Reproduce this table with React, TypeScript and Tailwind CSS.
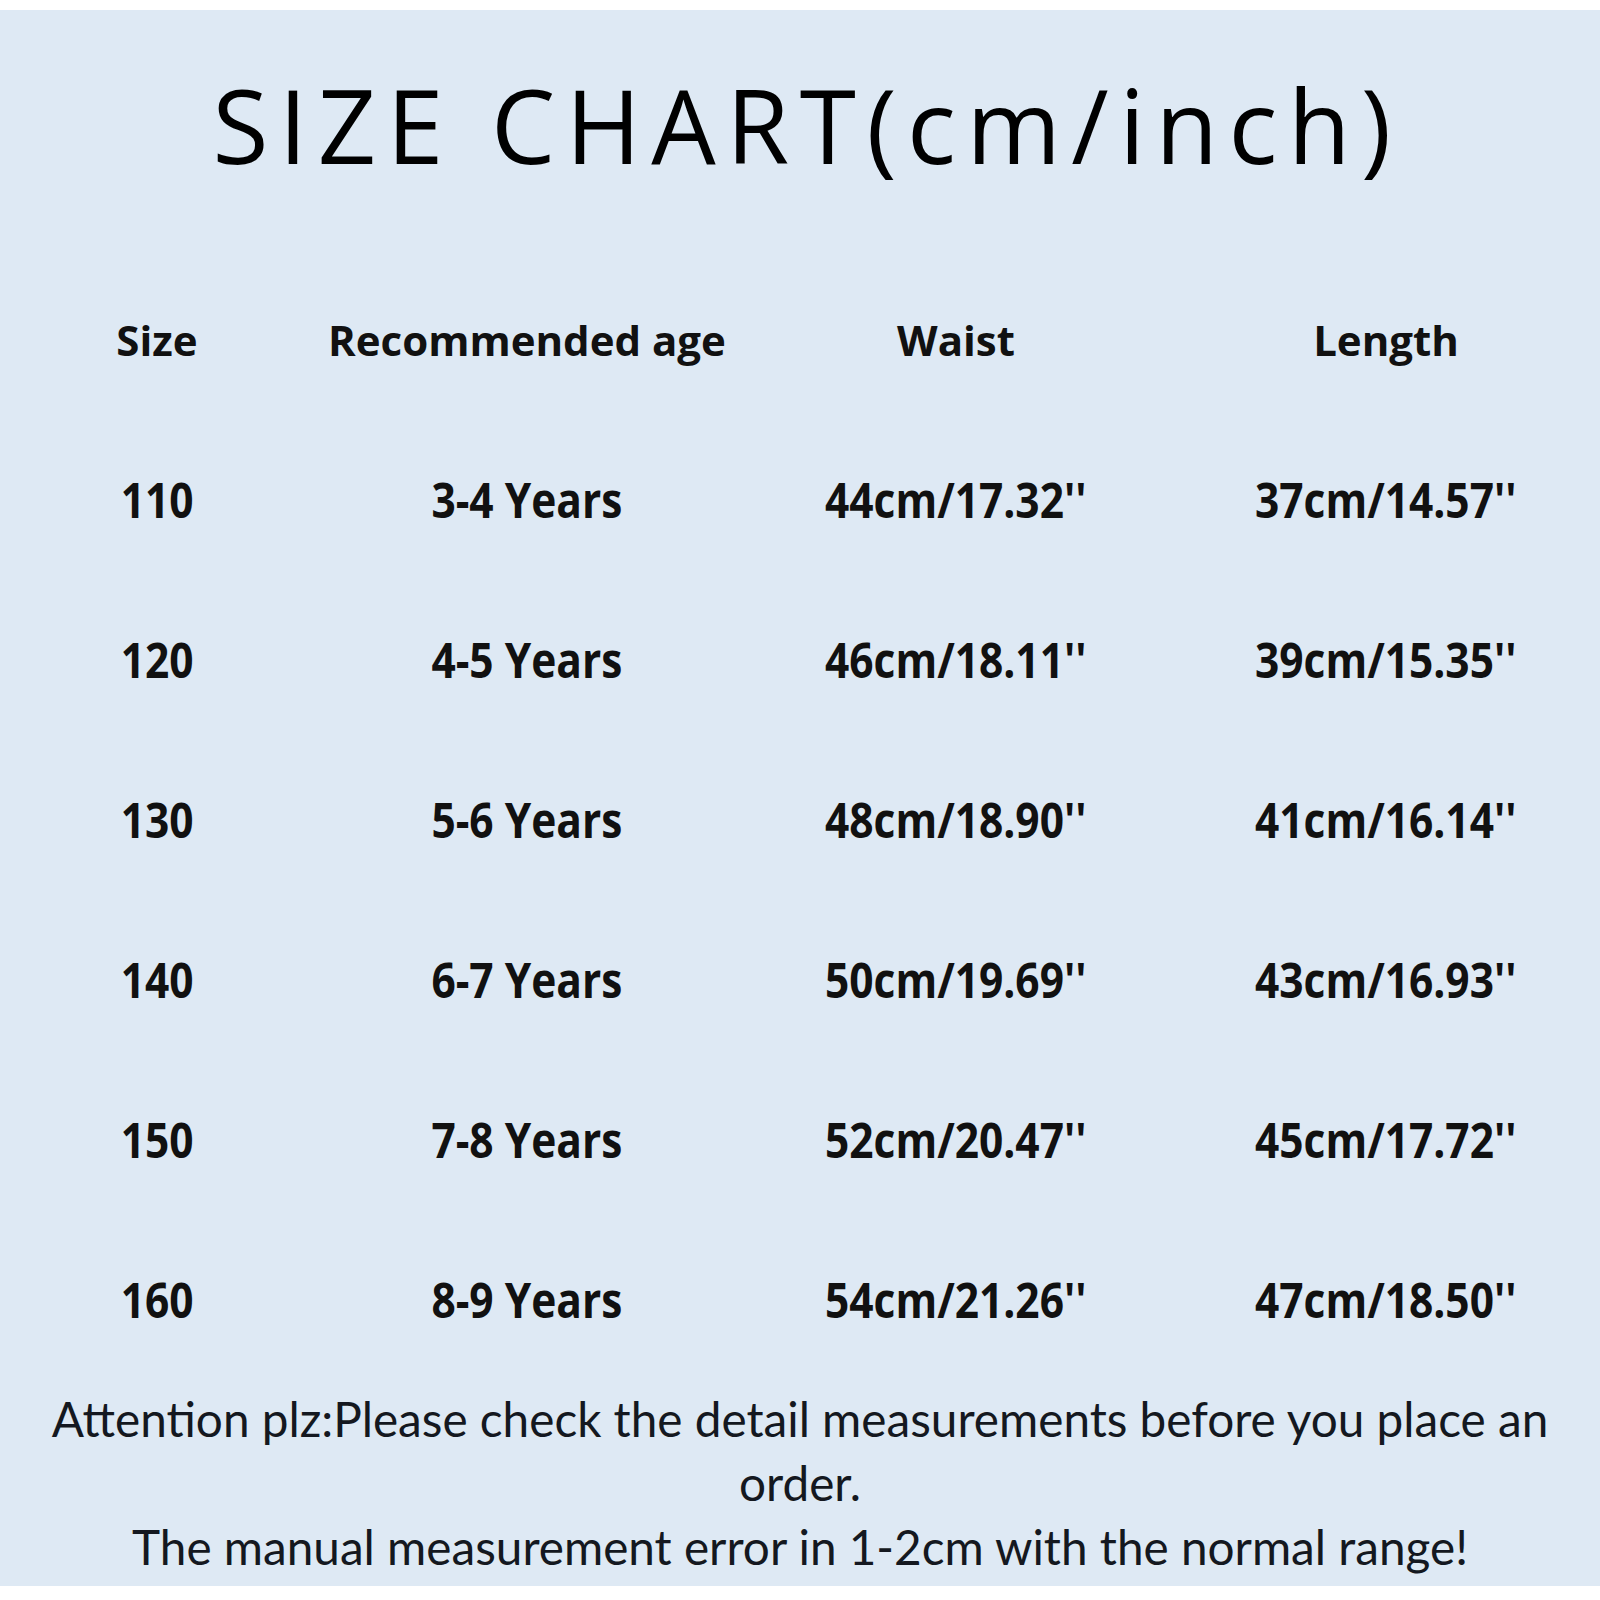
import React from "react";

const rows = [
  ["110", "3-4 Years", "44cm/17.32''", "37cm/14.57''"],
  ["120", "4-5 Years", "46cm/18.11''", "39cm/15.35''"],
  ["130", "5-6 Years", "48cm/18.90''", "41cm/16.14''"],
  ["140", "6-7 Years", "50cm/19.69''", "43cm/16.93''"],
  ["150", "7-8 Years", "52cm/20.47''", "45cm/17.72''"],
  ["160", "8-9 Years", "54cm/21.26''", "47cm/18.50''"],
];

const headers = ["Size", "Recommended age", "Waist", "Length"];

export default function App() {
  return (
    <div className="w-[1600px] h-[1600px] bg-white pt-[10px]">
      <div className="h-[1576px] bg-[#dee9f4] flex flex-col">
        <div className="h-[230px] flex items-center justify-center pl-[14px]">
          <h1 className="text-[102px] leading-none text-black font-normal tracking-[10.5px] [font-family:'Open_Sans',sans-serif]">
            SIZE CHART(cm/inch)
          </h1>
        </div>
        <div className="mt-[20px] grid grid-cols-[314px_426px_432px_428px] [font-family:'Open_Sans',sans-serif] font-bold text-[#111]">
          {headers.map((h) => (
            <div key={h} className="h-[160px] flex items-center justify-center">
              <span className="text-[42px] leading-none whitespace-nowrap">{h}</span>
            </div>
          ))}
          {rows.map((r) =>
            r.map((c, i) => (
              <div key={r[0] + i} className="h-[160px] flex items-center justify-center">
                <span className="text-[48px] leading-none scale-x-[0.885] whitespace-nowrap">{c}</span>
              </div>
            ))
          )}
        </div>
        <div className="mt-[7px] text-center text-[47.7px] leading-[64px] text-[#141820] [font-family:Lato,sans-serif]">
          <p>
            Attention plz:Please check the detail measurements before you place an
            <br />
            order.
          </p>
          <p>The manual measurement error in 1-2cm with the normal range!</p>
        </div>
      </div>
    </div>
  );
}
